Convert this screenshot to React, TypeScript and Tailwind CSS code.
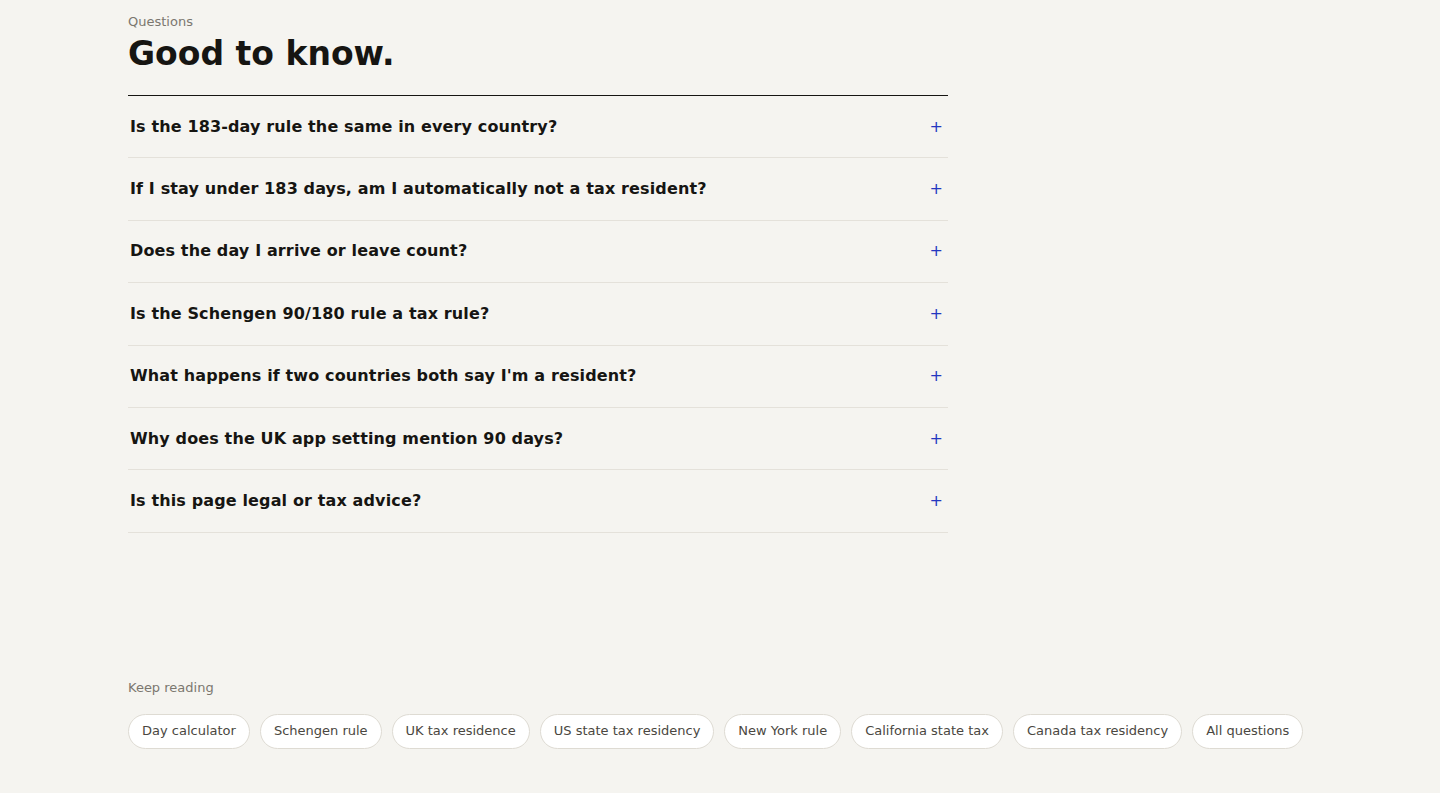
import React from 'react';

const questions = [
  'Is the 183-day rule the same in every country?',
  'If I stay under 183 days, am I automatically not a tax resident?',
  'Does the day I arrive or leave count?',
  'Is the Schengen 90/180 rule a tax rule?',
  "What happens if two countries both say I'm a resident?",
  'Why does the UK app setting mention 90 days?',
  'Is this page legal or tax advice?',
];

const links = [
  'Day calculator',
  'Schengen rule',
  'UK tax residence',
  'US state tax residency',
  'New York rule',
  'California state tax',
  'Canada tax residency',
  'All questions',
];

export default function App() {
  return (
    <div className="min-h-screen bg-[#f5f4f0] text-[#161512]" style={{ fontFamily: '"DejaVu Sans", sans-serif' }}>
      <div className="mx-auto max-w-[1184px] pt-[15px] pb-11">
        {/* FAQ */}
        <section className="max-w-[820px]">
          <p className="text-[13px] leading-[14px] text-[#7b776f]">Questions</p>
          <h2 className="mt-[6px] text-[33px] leading-[38px] font-bold">Good to know.</h2>
          <div className="mt-[22px] border-t border-[#161512]">
            {questions.map((q) => (
              <button
                key={q}
                className="flex w-full items-center justify-between border-b border-[#e4e1da] pl-[2px] pr-[5px] h-[62.4px] text-left"
              >
                <span className="text-[16px] font-bold leading-6 tracking-[0.13px]">{q}</span>
                <span className="text-[16px] leading-6 font-medium text-[#2437c0]">+</span>
              </button>
            ))}
          </div>
        </section>

        {/* Keep reading */}
        <section className="mt-[147px]">
          <p className="text-[13px] leading-4 text-[#7b776f]">Keep reading</p>
          <div className="mt-[18px] flex flex-wrap gap-[10px]">
            {links.map((l) => (
              <a
                key={l}
                href="#"
                className="inline-flex h-[35px] items-center rounded-full border border-[#dedbd3] bg-white px-[13px] text-[13px] text-[#4a4741]"
              >
                {l}
              </a>
            ))}
          </div>
        </section>
      </div>
    </div>
  );
}
